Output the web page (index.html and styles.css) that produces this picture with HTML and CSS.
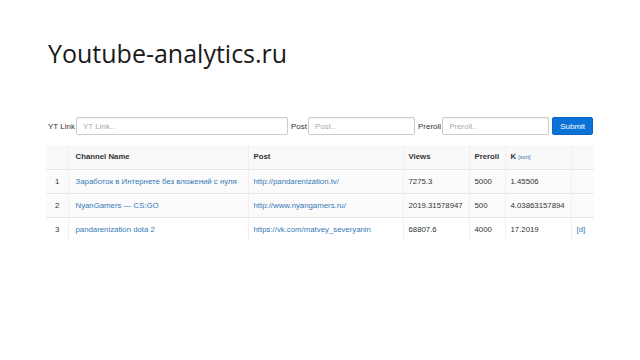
FILE: index.html
```html
<!DOCTYPE html>
<html lang="en">
<head>
    <meta charset="UTF-8">
    <title>Youtube-analytics.ru</title>
    <link rel="stylesheet" href="styles.css">
</head>
<body>
    <div class="slide">
        <h1>Youtube-analytics.ru</h1>
        <form class="add-form">
            <label for="yt">YT Link</label>
            <input type="text" id="yt" class="yt-input" placeholder="YT Link..">
            <label for="post">Post</label>
            <input type="text" id="post" class="post-input" placeholder="Post..">
            <label for="preroll">Preroll</label>
            <input type="text" id="preroll" class="preroll-input" placeholder="Preroll..">
            <button type="button">Submit</button>
        </form>
        <table class="channels">
            <thead>
                <tr>
                    <th class="col-num"></th>
                    <th class="col-name">Channel Name</th>
                    <th class="col-post">Post</th>
                    <th class="col-views">Views</th>
                    <th class="col-preroll">Preroll</th>
                    <th class="col-k">K <a href="#">[sort]</a></th>
                    <th class="col-del"></th>
                </tr>
            </thead>
            <tbody>
                <tr>
                    <td>1</td>
                    <td><a href="#">Заработок в Интернете без вложений с нуля</a></td>
                    <td><a href="#">http://pandarenization.tv/</a></td>
                    <td>7275.3</td>
                    <td>5000</td>
                    <td>1.45506</td>
                    <td></td>
                </tr>
                <tr>
                    <td>2</td>
                    <td><a href="#">NyanGamers — CS:GO</a></td>
                    <td><a href="#">http://www.nyangamers.ru/</a></td>
                    <td>2019.31578947</td>
                    <td>500</td>
                    <td>4.03863157894</td>
                    <td></td>
                </tr>
                <tr>
                    <td>3</td>
                    <td><a href="#">pandarenization dota 2</a></td>
                    <td><a href="#">https://vk.com/matvey_severyanin</a></td>
                    <td>68807.6</td>
                    <td>4000</td>
                    <td>17.2019</td>
                    <td><a href="#">[d]</a></td>
                </tr>
            </tbody>
        </table>
    </div>
</body>
</html>
```

FILE: styles.css
```css
/* Slide with the analytics page */
body {
    margin: 0;
    background: #fff;
}
.slide {
    width: 640px;
    height: 360px;
    padding: 0 46px;
    box-sizing: border-box;
}
h1 {
    margin: 0;
    padding: 37px 0 0 2px;
    height: 81px;
    box-sizing: border-box;
    font-family: "Open Sans", sans-serif;
    font-weight: 400;
    font-size: 25px;
    line-height: 32px;
    color: #1a1a1a;
}
.add-form {
    display: flex;
    align-items: center;
    height: 18px;
    margin-top: 36px;
    font-family: "Liberation Sans", Arial, sans-serif;
    font-size: 8px;
    color: #333;
    white-space: nowrap;
}
.add-form label {
    flex: none;
    margin: 0 1px 0 3px;
}
.add-form label:first-child {
    margin-left: 2px;
}
.add-form input {
    flex: none;
    height: 18px;
    box-sizing: border-box;
    border: 1px solid #ccc;
    border-radius: 2px;
    padding: 0 6px;
    font-family: inherit;
    font-size: 8px;
    color: #555;
    box-shadow: inset 0 1px 1px rgba(0,0,0,0.06);
}
.add-form input::placeholder {
    color: #aaa;
}
.yt-input { width: 212px; }
.post-input { width: 107px; }
.preroll-input { width: 107px; }
.add-form button {
    flex: none;
    margin-left: 3px;
    width: 41px;
    height: 18px;
    border: 1px solid #0a67c8;
    border-radius: 2px;
    background-color: #0b72d6;
    color: #fff;
    font-family: inherit;
    font-size: 8px;
    padding: 0;
}
.channels {
    width: 548px;
    margin-top: 10px;
    table-layout: fixed;
    border-collapse: collapse;
    font-family: "Liberation Sans", Arial, sans-serif;
    font-size: 7.8px;
    color: #333;
}
.channels th, .channels td {
    box-sizing: border-box;
    height: 24px;
    padding: 0 5px;
    text-align: left;
    white-space: nowrap;
    border-top: 1px solid #e6e6e6;
    border-left: 1px solid #f0f0f0;
}
.channels th:first-child, .channels td:first-child {
    border-left: none;
    padding-left: 9px;
}
.channels th:nth-child(2), .channels td:nth-child(2) {
    padding-left: 7px;
}
.channels th {
    font-weight: bold;
    border-top: none;
    background: #f9f9f9;
}
.channels tbody tr:nth-child(1),
.channels tbody tr:nth-child(2) {
    background: #fbfbfb;
}
.channels a {
    color: #337ab7;
    text-decoration: none;
}
.channels th a {
    font-weight: normal;
    font-size: 5.5px;
}
.col-num { width: 22px; }
.col-name { width: 180px; }
.col-post { width: 155px; }
.col-views { width: 66px; }
.col-preroll { width: 36px; }
.col-k { width: 66px; }
.col-del { width: 23px; }
```
